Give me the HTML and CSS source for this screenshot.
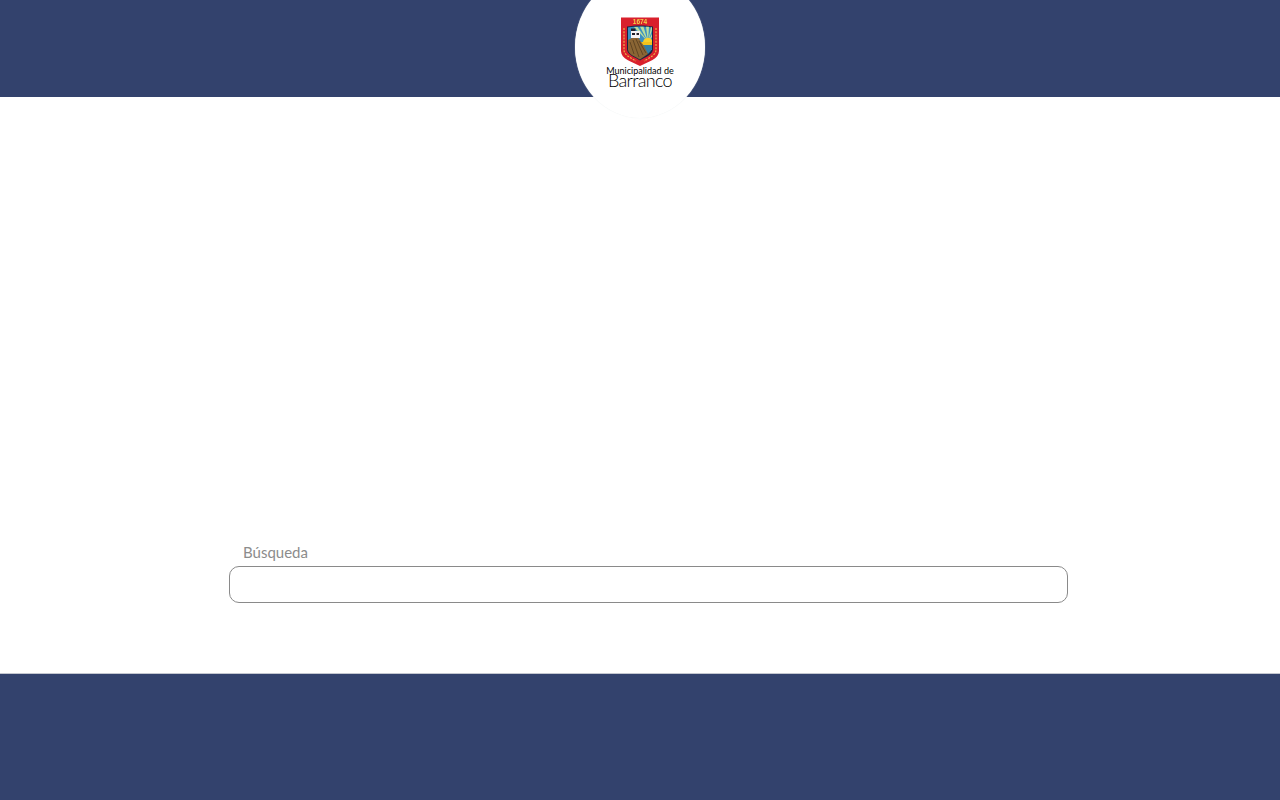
FILE: index.html
```html
<!DOCTYPE html>
<html lang="es">
<head>
<meta charset="utf-8">
<title>Municipalidad de Barranco</title>
<link rel="stylesheet" href="styles.css">
</head>
<body>
<header class="top">
  <div class="badge">
    <svg class="shield" viewBox="0 0 38 49" width="38" height="49" aria-hidden="true">
      <path d="M0 0.5H38V34C38 42 27 45 19 49C11 45 0 42 0 34Z" fill="#d9202c"/>
      <path d="M6 9.5C14 8 24 8 32 9.5V32C32 38 24 40 19 43.5C14 40 6 38 6 32Z" fill="#1a2340"/>
      <path d="M7 10.5C14 9.2 24 9.2 31 10.5V33H7Z" fill="#3a8fc2"/>
      <path d="M27 25L13 10H16.5ZM27 25L19 9.8H22.5ZM27 25L25 9.8H28ZM27 25L30 10.3H31V13ZM27 25L31 17V20Z" fill="#b9dd9c"/>
      <path d="M22 25A5 5 0 0 1 31 23V25Z" fill="#f7d02a"/>
      <path d="M18 25H31V28H20Z" fill="#f2c21c"/>
      <path d="M20 28H31V32C30 34 28 36 27 37Z" fill="#2f7fa8"/>
      <path d="M7 23L12 20.5H17L23 29L27 37C24 39 21 41 19 42.5C14 39.5 7 37.5 7 32Z" fill="#8a6534"/>
      <path d="M12 23L18 40M15 22L22 38M9 25L13 37M18 24L25 36" stroke="#5a4120" stroke-width="0.9" fill="none"/>
      <rect x="10" y="14" width="9" height="7" fill="#f5f5f5"/>
      <rect x="10" y="11.5" width="4.5" height="2.5" fill="#20202a"/>
      <rect x="11" y="16" width="3" height="2" fill="#20202a"/>
      <rect x="15.5" y="16" width="2.5" height="2" fill="#20202a"/>
      <path d="M3 11V33C3 38 10 41 15 44M35 11V33C35 38 28 41 23 44" stroke="#e9b24a" stroke-width="1.2" stroke-dasharray="2 1.2" fill="none"/>
      <text class="shield-year" x="19" y="7.2" text-anchor="middle">1674</text>
    </svg>
    <div class="logo-small">Municipalidad de</div>
    <div class="logo-big">Barranco</div>
  </div>
</header>
<main class="content">
  <form class="search">
    <label class="search-label" for="q">Búsqueda</label>
    <input class="search-input" id="q" type="text">
  </form>
</main>
<footer class="bottom"></footer>
</body>
</html>
```

FILE: styles.css
```css
* { box-sizing: border-box; }
html, body { height: 100%; }
body {
  margin: 0;
  display: flex;
  flex-direction: column;
  height: 800px;
  overflow: hidden;
  background: #fff;
  font-family: "Lato", "Liberation Sans", sans-serif;
}
.top {
  position: relative;
  flex: 0 0 97px;
  background: #33426d;
}
.badge {
  position: absolute;
  left: 575px;
  top: -24px;
  width: 130px;
  height: 142px;
  border-radius: 50%;
  background: #fff;
  box-shadow: 0 0 1px #e8eded;
  display: flex;
  flex-direction: column;
  align-items: center;
  padding-top: 41px;
}
.shield {
  display: block;
  width: 38px;
  height: 49px;
  flex: none;
  filter: blur(0.4px);
}
.shield-year {
  font-family: "Liberation Sans", sans-serif;
  font-size: 6.5px;
  font-weight: 700;
  fill: #f2d24a;
}
.logo-small {
  font-family: "Lato", sans-serif;
  font-weight: 400;
  font-size: 9px;
  line-height: 9px;
  color: #000;
  white-space: nowrap;
}
.logo-big {
  font-family: "Lato", sans-serif;
  font-weight: 300;
  font-size: 18px;
  line-height: 11px;
  color: #000;
  white-space: nowrap;
  letter-spacing: -0.7px;
}
.content {
  flex: 1;
  display: flex;
  flex-direction: column;
  justify-content: flex-end;
  padding: 0 212px 70px 229px;
}
.search { display: flex; flex-direction: column; }
.search-label {
  padding-left: 14px;
  font-size: 15px;
  line-height: 20px;
  margin-bottom: 4px;
  color: #8c8c8c;
}
.search-input {
  display: block;
  width: 839px;
  height: 37px;
  border: 1px solid #8a8a8a;
  border-radius: 10px;
  background: #fff;
  outline: none;
}
.bottom {
  flex: 0 0 127px;
  background: #33426d;
  border-top: 1px solid #c4c7d0;
}
```
